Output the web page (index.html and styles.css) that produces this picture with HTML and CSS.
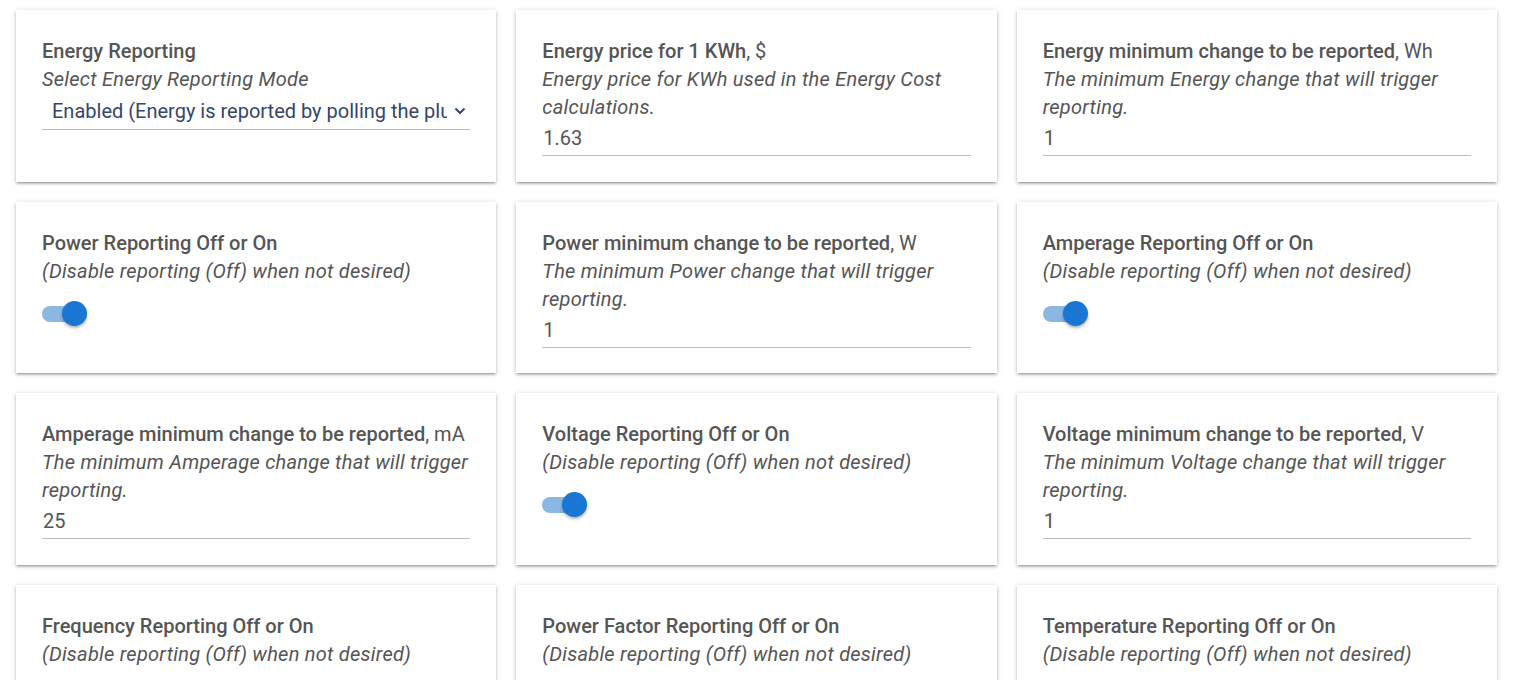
FILE: index.html
```html
<!DOCTYPE html>
<html>
<head>
<meta charset="utf-8">
<link rel="stylesheet" href="styles.css">
</head>
<body>
<div class="grid">
  <div class="card">
    <div class="title">Energy Reporting</div>
    <div class="desc">Select Energy Reporting Mode</div>
    <div class="select"><span class="sel-text">Enabled (Energy is reported by polling the plug)</span><svg class="chev" width="12" height="8" viewBox="0 0 12 8"><path d="M1.5 1.5 L6 6 L10.5 1.5" fill="none" stroke="#34466a" stroke-width="2"/></svg></div>
  </div>
  <div class="card">
    <div class="title"><b>Energy price for 1 KWh</b>, $</div>
    <div class="desc">Energy price for KWh used in the Energy Cost calculations.</div>
    <div class="input">1.63</div>
  </div>
  <div class="card">
    <div class="title"><b>Energy minimum change to be reported</b>, Wh</div>
    <div class="desc">The minimum Energy change that will trigger reporting.</div>
    <div class="input">1</div>
  </div>

  <div class="card">
    <div class="title">Power Reporting Off or On</div>
    <div class="desc">(Disable reporting (Off) when not desired)</div>
    <div class="toggle"><span class="track"></span><span class="knob"></span></div>
  </div>
  <div class="card">
    <div class="title"><b>Power minimum change to be reported</b>, W</div>
    <div class="desc">The minimum Power change that will trigger reporting.</div>
    <div class="input">1</div>
  </div>
  <div class="card">
    <div class="title">Amperage Reporting Off or On</div>
    <div class="desc">(Disable reporting (Off) when not desired)</div>
    <div class="toggle"><span class="track"></span><span class="knob"></span></div>
  </div>

  <div class="card">
    <div class="title"><b>Amperage minimum change to be reported</b>, mA</div>
    <div class="desc">The minimum Amperage change that will trigger reporting.</div>
    <div class="input">25</div>
  </div>
  <div class="card">
    <div class="title">Voltage Reporting Off or On</div>
    <div class="desc">(Disable reporting (Off) when not desired)</div>
    <div class="toggle"><span class="track"></span><span class="knob"></span></div>
  </div>
  <div class="card">
    <div class="title"><b>Voltage minimum change to be reported</b>, V</div>
    <div class="desc">The minimum Voltage change that will trigger reporting.</div>
    <div class="input">1</div>
  </div>

  <div class="card">
    <div class="title">Frequency Reporting Off or On</div>
    <div class="desc">(Disable reporting (Off) when not desired)</div>
    <div class="toggle"><span class="track"></span><span class="knob"></span></div>
  </div>
  <div class="card">
    <div class="title">Power Factor Reporting Off or On</div>
    <div class="desc">(Disable reporting (Off) when not desired)</div>
    <div class="toggle"><span class="track"></span><span class="knob"></span></div>
  </div>
  <div class="card">
    <div class="title">Temperature Reporting Off or On</div>
    <div class="desc">(Disable reporting (Off) when not desired)</div>
    <div class="toggle"><span class="track"></span><span class="knob"></span></div>
  </div>
</div>
</body>
</html>
```

FILE: styles.css
```css
html, body {
  margin: 0;
  padding: 0;
  background: #ffffff;
  font-family: Roboto, "Liberation Sans", sans-serif;
  overflow: hidden;
}

.grid {
  display: grid;
  grid-template-columns: repeat(3, minmax(0, 1fr));
  column-gap: 20px;
  row-gap: 20px;
  padding: 10px 16px;
}

.card {
  min-width: 0;
  background: #fff;
  padding: 27px 26px 25.6px 26px;
  box-shadow: 0 2px 2px rgba(0,0,0,0.14), 0 3px 1px -2px rgba(0,0,0,0.12), 0 1px 5px rgba(0,0,0,0.2);
}

.title {
  font-size: 20px;
  line-height: 28px;
  font-weight: 500;
  color: #555;
}

.title b {
  font-weight: 500;
}

.title:has(b) {
  font-weight: 400;
}

.desc {
  font-size: 20px;
  line-height: 28px;
  font-style: italic;
  letter-spacing: 0.25px;
  color: #555;
}

.input {
  font-size: 20px;
  line-height: 26px;
  color: #555;
  padding: 4px 1px 4px 1px;
  border-bottom: 1px solid #bdbdbd;
}

.select {
  display: flex;
  align-items: center;
  font-size: 20px;
  line-height: 26px;
  color: #34466a;
  padding: 5px 4px 5px 10px;
  border-bottom: 1px solid #bdbdbd;
}

.sel-text {
  flex: 1;
  min-width: 0;
  white-space: nowrap;
  overflow: hidden;
}

.chev {
  flex: none;
  margin-left: 7px;
}

.toggle {
  position: relative;
  width: 46px;
  height: 28px;
  margin-top: 15px;
}

.track {
  position: absolute;
  left: 0;
  top: 6px;
  width: 38px;
  height: 16px;
  border-radius: 8px;
  background: #8ab8e3;
}

.knob {
  position: absolute;
  left: 20px;
  top: 1px;
  width: 25px;
  height: 25px;
  border-radius: 50%;
  background: #1976d2;
  box-shadow: 0 2px 3px rgba(0,0,0,0.3);
}
```
